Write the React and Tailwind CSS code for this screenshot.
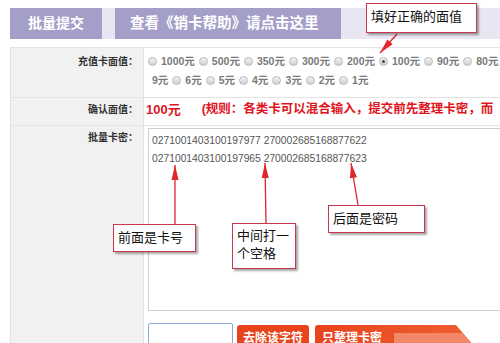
import React from 'react';

const FONT = { fontFamily: '"Liberation Sans", "Noto Sans CJK SC", sans-serif' };

const line1 = [
    ['1000元', false], ['500元', false], ['350元', false], ['300元', false], ['200元', false],
    ['100元', true], ['90元', false], ['80元', false], ['50元', false], ['30元', false],
];
const line2 = ['6元', '5元', '4元', '3元', '2元', '1元'];

const Radio = ({ checked }) => (
    <span className="w-[9px] h-[9px] rounded-full border border-[#b9b9b9] bg-gradient-to-b from-[#f2f2f2] to-[#d2d2d2] flex items-center justify-center shrink-0">
        {checked && <span className="w-[3px] h-[3px] rounded-full bg-[#444]"></span>}
    </span>
);

const Callout = ({ className, children }) => (
    <div className={`absolute bg-white border border-[#c9374c] shadow-[2px_2px_2px_rgba(0,0,0,0.35)] text-[13px] leading-[18px] text-[#111] pl-[4px] ${className}`}>
        {children}
    </div>
);

// arrowhead polygon from tail -> tip
const head = (tx, ty, x, y) => {
    const dx = x - tx, dy = y - ty;
    const len = Math.hypot(dx, dy);
    const ux = dx / len, uy = dy / len;
    const bx = x - ux * 15, by = y - uy * 15;
    const w = 3.5;
    return `${x},${y} ${bx - uy * w},${by + ux * w} ${bx + uy * w},${by - ux * w}`;
};

const arrows = [
    [397, 34, 380, 53],
    [175, 224, 175, 165],
    [266, 223, 265, 163],
    [358, 205, 351, 163],
];

export default function App() {
    return (
        <div className="relative w-[500px] h-[343px] overflow-hidden bg-white" style={FONT}>
            {/* tab bar */}
            <div className="mt-[8px] ml-[10px] flex h-[31px] bg-[#e8e6f2] w-[490px]">
                <div className="w-[92px] bg-[#a39fc8] text-white font-bold text-[14px] flex items-center justify-center">
                    批量提交
                </div>
                <div className="ml-[13px] w-[226px] bg-[#a39fc8] text-white font-bold text-[14.5px] flex items-center pl-[15px] whitespace-nowrap">
                    查看《销卡帮助》请点击这里
                </div>
            </div>

            {/* form table */}
            <div className="mt-[8px] ml-[10px] w-[620px] border-t border-l border-[#e3e3e3] grid grid-cols-[133px_1fr]">
                <div className="bg-[#f1f1f1] border-r border-b border-[#e3e3e3] h-[50px] text-right pr-[5px] pt-[4px] text-[10px] font-bold text-[#333] leading-[19px]">
                    充值卡面值：
                </div>
                <div className="border-b border-[#e3e3e3] h-[50px] pt-[4px] pl-[4px] text-[10.5px] font-bold text-[#7a7a7a] leading-[19px]">
                    <div className="flex items-center h-[19px] whitespace-nowrap">
                        {line1.map(([t, c]) => (
                            <React.Fragment key={t}>
                                <Radio checked={c} />
                                <span className="ml-[4px] mr-[4px]">{t}</span>
                            </React.Fragment>
                        ))}
                    </div>
                    <div className="flex items-center h-[19px] whitespace-nowrap pl-[4px]">
                        <span className="mr-[4px]">9元</span>
                        {line2.map((t) => (
                            <React.Fragment key={t}>
                                <Radio />
                                <span className="ml-[4px] mr-[4px]">{t}</span>
                            </React.Fragment>
                        ))}
                    </div>
                </div>

                <div className="bg-[#f1f1f1] border-r border-b border-[#e3e3e3] h-[28px] flex items-center justify-end pr-[5px] pb-[4px] text-[10px] font-bold text-[#333]">
                    确认面值：
                </div>
                <div className="border-b border-[#e3e3e3] h-[28px] flex items-center pb-[4px] pl-[2px] text-[#e0141e] font-bold whitespace-nowrap">
                    <span className="text-[13px]">100元</span>
                    <span className="ml-[21px] text-[12.5px]">(规则：各类卡可以混合输入，提交前先整理卡密，而</span>
                </div>

                <div className="bg-[#f1f1f1] border-r border-[#e3e3e3] h-[230px] text-right pr-[5px] pt-[2px] text-[10px] font-bold text-[#333] leading-[19px]">
                    批量卡密：
                </div>
                <div className="h-[230px] pl-[4px] pt-[2px]">
                    <div className="w-[420px] h-[183px] border border-[#cfcfcf] pl-[3px] pt-[3px] text-[10.3px] text-[#555] leading-[18px] whitespace-nowrap">
                        <div>0271001403100197977 270002685168877622</div>
                        <div>0271001403100197965 270002685168877623</div>
                    </div>
                    <div className="mt-[12px] flex items-start">
                        <div className="w-[85px] h-[28px] border border-[#86acdc] rounded-[2px]"></div>
                        <div className="ml-[4px] mt-[2px] w-[72px] h-[26px] bg-[#e8441c] rounded-t-[3px] text-white font-bold text-[12px] pl-[6px] pt-[4px]">
                            去除该字符
                        </div>
                        <div className="ml-[6px] mt-[2px] flex">
                            <div className="relative w-[139px] h-[26px] bg-gradient-to-r from-[#e8441c] to-[#ee5a30] rounded-tl-[3px] text-white font-bold text-[12px] pl-[7px] pt-[4px]">
                                只整理卡密
                                <div className="absolute left-[79px] top-[8px] w-[60px] h-[18px] bg-[#f28868]"></div>
                            </div>
                            <svg width="20" height="26" viewBox="0 0 20 26">
                                <polygon points="0,0 2,0 19,20 19,26 0,26" fill="#ee5a30" />
                                <polygon points="0,8 8,8 19,21 19,26 0,26" fill="#f28868" />
                            </svg>
                        </div>
                    </div>
                </div>
            </div>

            {/* annotations */}
            <svg className="absolute left-0 top-0 pointer-events-none" width="500" height="343">
                {arrows.map(([tx, ty, x, y], i) => (
                    <g key={i}>
                        <line x1={tx} y1={ty} x2={x} y2={y} stroke="#e0262e" strokeWidth="1.3" />
                        <polygon points={head(tx, ty, x, y)} fill="#e0262e" />
                    </g>
                ))}
            </svg>
            <Callout className="left-[366px] top-[3px] w-[111px] h-[30px] pt-[4px]">填好正确的面值</Callout>
            <Callout className="left-[113px] top-[224px] w-[83px] h-[28px] pt-[4px]">前面是卡号</Callout>
            <Callout className="left-[232px] top-[223px] w-[64px] h-[46px] pt-[3px]">
                <div>中间打一</div>
                <div>个空格</div>
            </Callout>
            <Callout className="left-[328px] top-[205px] w-[97px] h-[28px] pt-[4px]">后面是密码</Callout>
        </div>
    );
}
